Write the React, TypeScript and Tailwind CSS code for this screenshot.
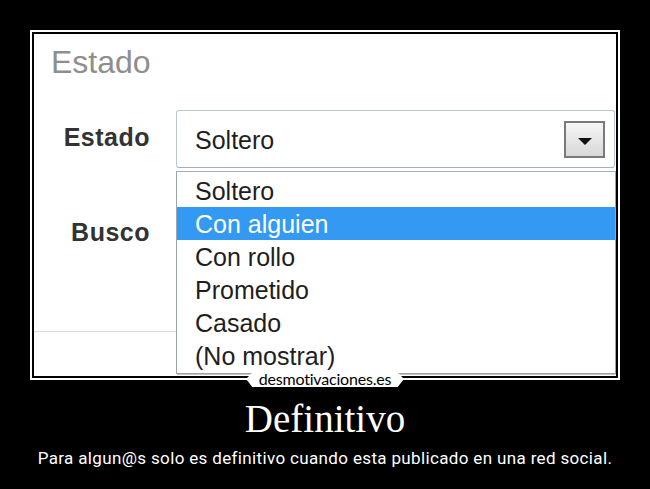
import React from "react";

const options = ["Soltero", "Con alguien", "Con rollo", "Prometido", "Casado", "(No mostrar)"];

function Arrow() {
  return (
    <svg width="14" height="8" viewBox="0 0 14 8" className="mt-[6px]">
      <polygon points="0,0 14,0 7,7" fill="#111" />
    </svg>
  );
}

function Badge() {
  return (
    <div className="absolute left-1/2 top-[339px] -translate-x-1/2 flex h-[16px] w-[158px] items-center justify-center bg-white [clip-path:polygon(5%_0,95%_0,100%_50%,96%_100%,4%_100%,0_50%)]">
      <span className="font-['Lato',sans-serif] text-[16px] leading-[16px] tracking-[-0.2px] text-black">
        desmotivaciones.es
      </span>
    </div>
  );
}

export default function App() {
  return (
    <div className="flex h-[489px] w-[650px] flex-col items-center bg-black pt-[30px]">
      <div className="relative border-2 border-white bg-black p-[2px]">
        <div className="relative h-[342px] w-[582px] overflow-hidden bg-white font-['Liberation_Sans',Arial,sans-serif]">
          <div className="pl-[17px] pt-[12px] text-[32px] leading-[32px] text-[#8e8e8e]">Estado</div>
          <div className="mt-[32px] grid grid-cols-[142px_1fr]">
            <div className="flex flex-col">
              <div className="flex flex-col items-end pr-[26px] text-[25px] font-bold leading-[25px] tracking-[0.5px] text-[#333]">
                <div className="pt-[15px]">Estado</div>
                <div className="mt-[70px]">Busco</div>
              </div>
              <div className="mt-[86px] h-px w-full bg-[#dadada]" />
            </div>
            <div className="flex w-[442px] flex-col">
              <div className="flex h-[58px] w-[439px] items-center justify-between rounded-[3px] border border-[#bcc6d0] border-b-[#9fb0c4] bg-white pl-[18px] pr-[9px]">
                <span className="pt-[3px] text-[25px] leading-[25px] text-[#1e1e1e]">Soltero</span>
                <div className="flex h-[37px] w-[41px] items-center justify-center border-2 border-[#7a7a7a] bg-linear-to-b from-[#f6f6f6] to-[#d8d8d8]">
                  <Arrow />
                </div>
              </div>
              <div className="mt-[3px] w-[440px] border border-[#9aa4ae] border-t-[#9fb0c4] bg-white pb-px pt-[2px] shadow-[1px_1px_0_#c4c4c4]">
                {options.map((o) => (
                  <div
                    key={o}
                    className={
                      o === "Con alguien"
                        ? "h-[33px] bg-[#3399f3] pl-[18px] pt-[2px] text-[25px] leading-[31px] text-white"
                        : "h-[33px] pl-[18px] pt-[2px] text-[25px] leading-[31px] text-[#1e1e1e]"
                    }
                  >
                    {o}
                  </div>
                ))}
              </div>
            </div>
          </div>
        </div>
        <Badge />
      </div>
      <div className="mt-[19px] font-['Liberation_Serif','Times_New_Roman',serif] text-[39px] leading-[39px] text-white">
        Definitivo
      </div>
      <div className="mt-[10px] font-['Roboto',sans-serif] text-[17px] leading-[20px] tracking-[0.35px] text-white">
        Para algun@s solo es definitivo cuando esta publicado en una red social.
      </div>
    </div>
  );
}
